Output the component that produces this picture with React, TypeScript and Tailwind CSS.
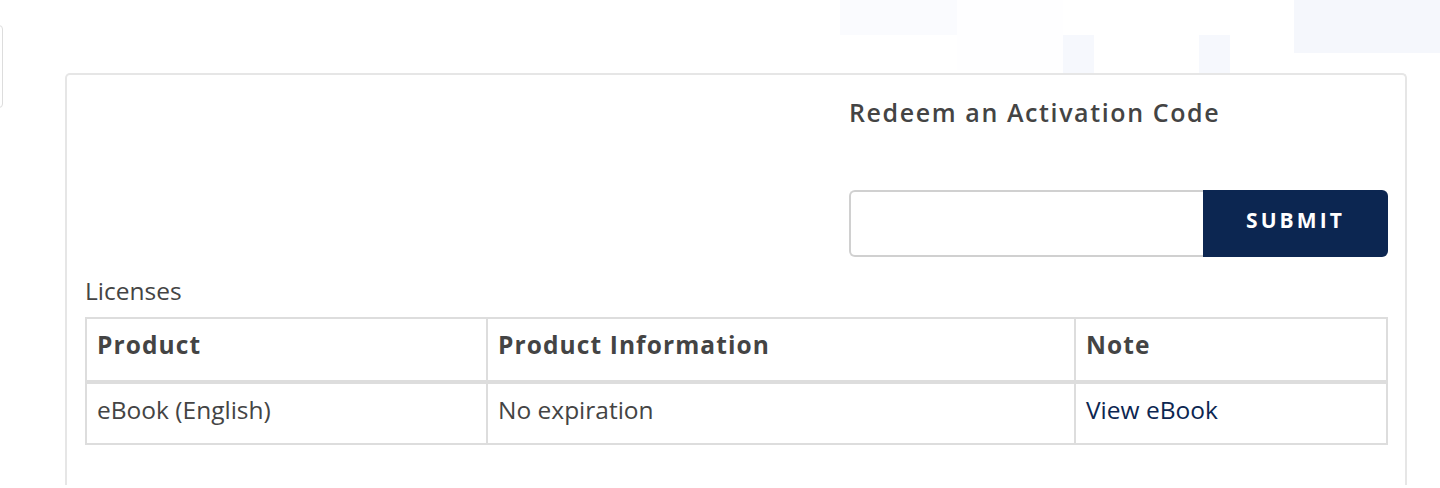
import React from "react";

const rows = [
  { product: "eBook (English)", info: "No expiration", note: "View eBook" },
];

export default function App() {
  return (
    <div className="relative h-[488px] w-[1440px] overflow-hidden bg-white font-['Open_Sans',sans-serif] text-[#444]">
      {/* faint background tiles */}
      <div className="absolute left-[840px] top-0 h-[35px] w-[117px] bg-[#fafbfe]" />
      <div className="absolute left-[957px] top-0 h-[70px] w-[106px] bg-[#fefeff]" />
      <div className="absolute left-[1063px] top-[35px] h-[38px] w-[31px] bg-[#f6f8fd]" />
      <div className="absolute left-[1199px] top-[35px] h-[38px] w-[31px] bg-[#f6f8fd]" />
      <div className="absolute left-[1294px] top-0 h-[53px] w-[146px] bg-[#f5f7fc]" />
      {/* sidebar stub */}
      <div className="absolute left-[-20px] top-[25px] h-[83px] w-[23px] rounded-r border border-[#ddd] bg-white" />

      <div className="relative ml-[65px] mt-[73px] w-[1342px] rounded-t-[5px] border-2 border-b-0 border-[#e6e6e6] bg-white pb-10 pl-[18px] pr-[17px] pt-[22px]">
        <div className="flex justify-end">
          <div className="w-[539px]">
            <h2 className="whitespace-nowrap text-[25px] font-semibold leading-[30px] tracking-[1.6px] text-[#444]">
              Redeem an Activation Code
            </h2>
            <div className="mt-[63px] flex h-[67px]">
              <input
                type="text"
                className="h-full w-[354px] rounded-l-[6px] border-2 border-r-0 border-[#d0d0d0] px-3 text-[20px] outline-none"
              />
              <button className="h-full flex-1 rounded-r-[6px] bg-[#0c2651] pb-[6px] text-[21px] font-bold tracking-[3.1px] text-white">
                SUBMIT
              </button>
            </div>
          </div>
        </div>

        <div className="mt-[19px] text-[24.5px] leading-[30px] text-[#444]">Licenses</div>
        <table className="mt-[11px] w-[1301px] table-fixed border-collapse text-[24.5px] leading-[34px] text-[#444]">
          <colgroup>
            <col className="w-[401px]" />
            <col className="w-[588px]" />
            <col className="w-[312px]" />
          </colgroup>
          <thead>
            <tr className="h-[64px] border-b-4 border-[#ddd]">
              <th className="border-2 border-[#ddd] px-[10px] pb-[10px] text-left font-bold tracking-[1.1px]">Product</th>
              <th className="border-2 border-[#ddd] px-[10px] pb-[10px] text-left font-bold tracking-[1.1px]">Product Information</th>
              <th className="border-2 border-[#ddd] px-[10px] pb-[10px] text-left font-bold tracking-[1.1px]">Note</th>
            </tr>
          </thead>
          <tbody>
            {rows.map((r) => (
              <tr key={r.product} className="h-[62px]">
                <td className="border-2 border-[#ddd] px-[10px] pb-[8px]">{r.product}</td>
                <td className="border-2 border-[#ddd] px-[10px] pb-[8px]">{r.info}</td>
                <td className="border-2 border-[#ddd] px-[10px] pb-[8px]">
                  <a href="#" className="text-[#0c2651]">{r.note}</a>
                </td>
              </tr>
            ))}
          </tbody>
        </table>
      </div>
    </div>
  );
}
